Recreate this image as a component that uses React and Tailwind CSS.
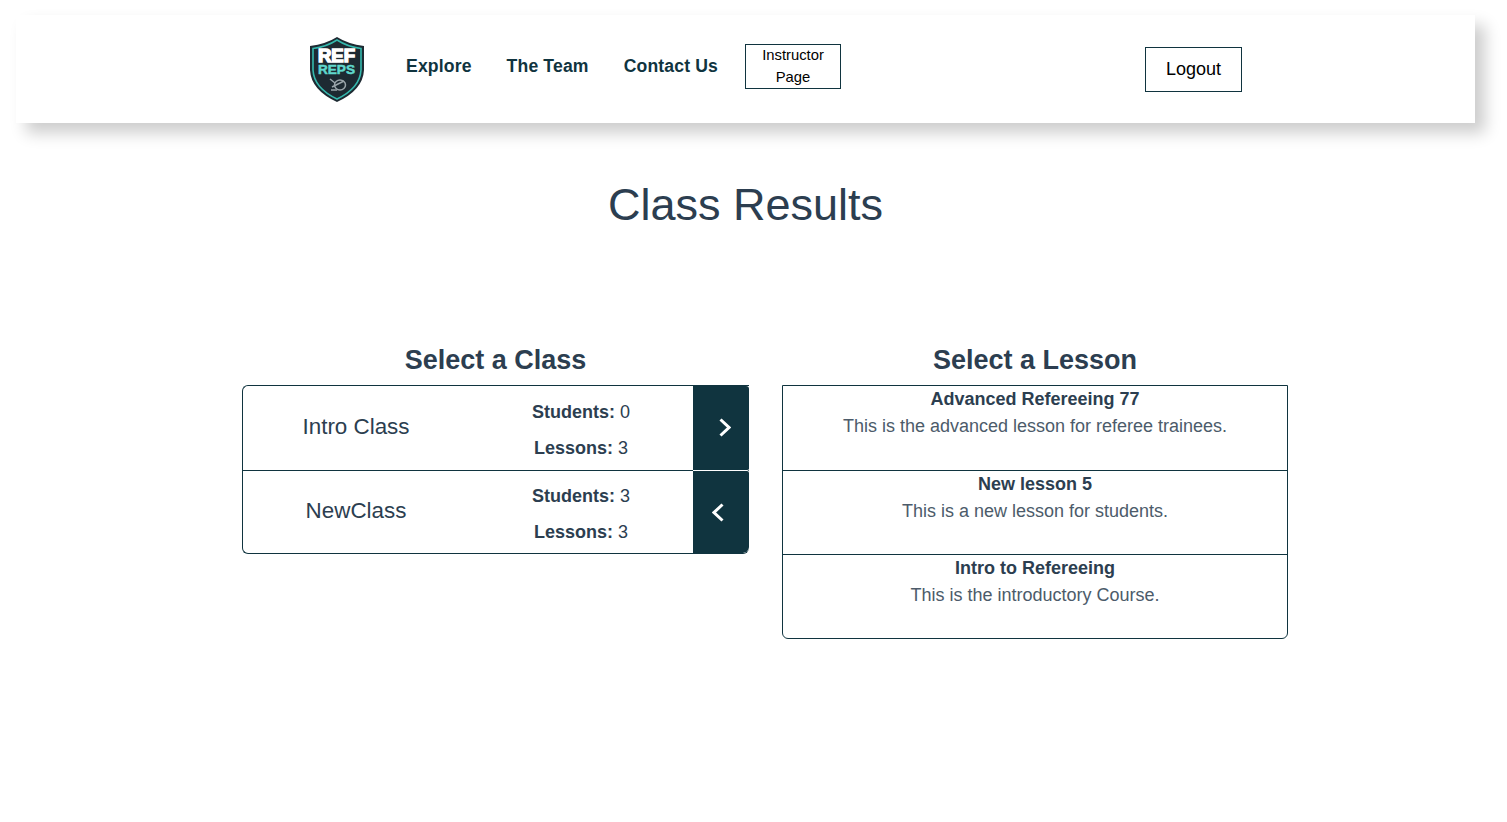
import React from "react";

const classes = [
  { name: "Intro Class", students: 0, lessons: 3, open: false },
  { name: "NewClass", students: 3, lessons: 3, open: true },
];

const lessons = [
  { title: "Advanced Refereeing 77", text: "This is the advanced lesson for referee trainees." },
  { title: "New lesson 5", text: "This is a new lesson for students." },
  { title: "Intro to Refereeing", text: "This is the introductory Course." },
];

function Logo() {
  return (
    <svg width="58" height="68" viewBox="0 0 58 68" className="shrink-0">
      <path d="M29 1 Q40 8 56 10 L56 34 Q55 54 29 66 Q3 54 2 34 L2 10 Q18 8 29 1 Z" fill="#1d2a32" />
      <path d="M29 4 Q40 11 53 12.500 L53 34 Q52 52 29 63 Q6 52 5 34 L5 12.500 Q18 11 29 4 Z" fill="none" stroke="#35b8ad" strokeWidth="1.6" />
      <text x="10" y="26" textLength="37" lengthAdjust="spacingAndGlyphs" fontFamily="Liberation Sans, sans-serif" fontWeight="700" fontSize="18" fill="#ffffff" stroke="#ffffff" strokeWidth="1.5">REF</text>
      <text x="10" y="38" textLength="37" lengthAdjust="spacingAndGlyphs" fontFamily="Liberation Sans, sans-serif" fontWeight="700" fontSize="12.500" fill="#5fd8cd" stroke="#5fd8cd" strokeWidth="0.5">REPS</text>
      <g fill="none" stroke="#9aa5aa" strokeWidth="1.5">
        <ellipse cx="32" cy="49" rx="5.500" ry="5" />
        <path d="M24 51 L36 45 M22 43 L27 47 M23 54 L29 54" />
      </g>
    </svg>
  );
}

function Chevron({ left }) {
  return (
    <svg width="12" height="19" viewBox="0 0 12 19" className={left ? "-ml-[7px]" : "ml-[8px] mb-[2px]"}>
      <path d={left ? "M10.500 1.500 L2 9.500 L10.500 17.500" : "M1.500 1.500 L10 9.500 L1.500 17.500"} fill="none" stroke="#fff" strokeWidth="3" />
    </svg>
  );
}

function ClassRow({ item, last }) {
  return (
    <div className={`flex ${last ? "h-[82px]" : "h-[85px] border-b border-[#10343f]"}`}>
      <div className="w-[226px] pb-[2px] flex items-center justify-center text-[22.4px] text-[#2c3e50]">{item.name}</div>
      <div className={`w-[224px] flex flex-col items-center text-[18px] leading-[21px] text-[#2c3e50] gap-[15px] ${last ? "pt-[15px]" : "pt-[16px]"}`}>
        <p><b>Students:</b> {item.students}</p>
        <p><b>Lessons:</b> {item.lessons}</p>
      </div>
      <div className={`w-[56px] bg-[#10343f] flex items-center justify-center ${last ? "rounded-br-[6px] rounded-tr-[2px]" : "relative -mb-px border-b border-white rounded-tr-[3px] rounded-br-[2px]"}`}>
        <Chevron left={item.open} />
      </div>
    </div>
  );
}

export default function App() {
  return (
    <div className="min-h-[822px] bg-white font-['Liberation_Sans',sans-serif] pt-[15px]">
      <nav className="ml-[16px] w-[1459px] h-[108px] bg-white shadow-[10px_10px_15px_rgba(0,0,0,0.2)] flex items-center pl-[292px] text-[#10343f]">
        <div className="mt-[1px]"><Logo /></div>
        <div className="flex items-center gap-[35px] ml-[40px] text-[17.6px] tracking-[0.15px] font-bold -mt-[5px]">
          <span>Explore</span>
          <span>The Team</span>
          <span>Contact Us</span>
        </div>
        <div className="ml-[27px] -mt-[5px] w-[96px] h-[45px] border border-[#10343f] text-center text-[14.8px] leading-[22px] text-black">
          <div className="-mt-px">
            Instructor
            <br />
            Page
          </div>
        </div>
        <div className="ml-[304px] mt-[1px] w-[97px] h-[45px] border border-[#10343f] flex items-center justify-center text-[18px] text-black">
          Logout
        </div>
      </nav>

      <h1 className="mt-[53px] w-[1491px] text-center text-[45px] leading-[57px] text-[#2c3e50]">Class Results</h1>

      <div className="mt-[110px] ml-[242px] flex items-start gap-[33px]">
        <section className="w-[507px]">
          <h2 className="text-center text-[27px] leading-[35px] font-bold text-[#2c3e50] mb-[7px]">Select a Class</h2>
          <div className="border-y border-l border-[#10343f] rounded-l-[6px] rounded-br-[6px] overflow-hidden">
            {classes.map((c, i) => (
              <ClassRow key={c.name} item={c} last={i === classes.length - 1} />
            ))}
          </div>
        </section>

        <section className="w-[506px]">
          <h2 className="text-center text-[27px] leading-[35px] font-bold text-[#2c3e50] mb-[7px]">Select a Lesson</h2>
          <div className="border border-[#10343f] rounded-b-[6px]">
            {lessons.map((l, i) => (
              <div
                key={l.title}
                className={`text-center text-[18px] text-[#2c3e50] pt-[3px] ${i === 0 ? "h-[85px] border-b border-[#10343f]" : i === 1 ? "h-[84px] border-b border-[#10343f]" : "h-[83px]"}`}
              >
                <p className="font-bold leading-[21px]">{l.title}</p>
                <p className="mt-[6px] leading-[21px] text-[#4c5b6a]">{l.text}</p>
              </div>
            ))}
          </div>
        </section>
      </div>
    </div>
  );
}
